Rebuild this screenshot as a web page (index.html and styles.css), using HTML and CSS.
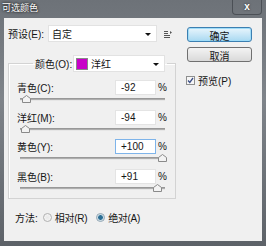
FILE: index.html
```html
<!DOCTYPE html>
<html lang="zh">
<head>
  <meta charset="UTF-8" />
  <title>可选颜色</title>
  <link rel="stylesheet" href="styles.css">
</head>
<body>

<div class="window">
  <div class="titlebar">
    <span class="title">可选颜色</span>
    <span class="close">x</span>
  </div>

  <div class="client">
    <div class="main">
      <div class="preset-row">
        <label class="preset-label">预设(E):</label>
        <div class="select preset-select">
          <span>自定</span>
          <span class="arrow"></span>
        </div>
        <svg class="preset-menu" width="9" height="9" viewBox="0 0 9 9">
          <path d="M0 1.5h4M0 3.5h4M0 5.5h6M0 7.5h6" stroke="#555" stroke-width="1" />
          <path d="M6 1l2 1.5-2 1.5z" fill="#555" />
        </svg>
      </div>

      <fieldset class="group">
        <legend>
          <label>颜色(O):</label>
          <div class="select color-select">
            <span class="swatch"></span>
            <span>洋红</span>
            <span class="arrow"></span>
          </div>
        </legend>

        <div class="rows">
          <div class="row">
            <div class="line">
              <label>青色(C):</label>
              <div class="field">-92</div>
              <span class="pct">%</span>
            </div>
            <div class="slider">
              <svg class="thumb" style="left:2px" width="9" height="8" viewBox="0 0 9 8"><polygon points="0.5,7.5 0.5,3.5 4.5,0.5 8.5,3.5 8.5,7.5" /></svg>
            </div>
          </div>
          <div class="row">
            <div class="line">
              <label>洋红(M):</label>
              <div class="field">-94</div>
              <span class="pct">%</span>
            </div>
            <div class="slider">
              <svg class="thumb" style="left:1px" width="9" height="8" viewBox="0 0 9 8"><polygon points="0.5,7.5 0.5,3.5 4.5,0.5 8.5,3.5 8.5,7.5" /></svg>
            </div>
          </div>
          <div class="row">
            <div class="line">
              <label>黄色(Y):</label>
              <div class="field focused">+100</div>
              <span class="pct">%</span>
            </div>
            <div class="slider">
              <svg class="thumb" style="left:138px" width="9" height="8" viewBox="0 0 9 8"><polygon points="0.5,7.5 0.5,3.5 4.5,0.5 8.5,3.5 8.5,7.5" /></svg>
            </div>
          </div>
          <div class="row">
            <div class="line">
              <label>黑色(B):</label>
              <div class="field">+91</div>
              <span class="pct">%</span>
            </div>
            <div class="slider">
              <svg class="thumb" style="left:133px" width="9" height="8" viewBox="0 0 9 8"><polygon points="0.5,7.5 0.5,3.5 4.5,0.5 8.5,3.5 8.5,7.5" /></svg>
            </div>
          </div>
        </div>
      </fieldset>

      <div class="method">
        <span>方法:</span>
        <span class="radio"></span>
        <span class="radio-label">相对(R)</span>
        <span class="radio checked"></span>
        <span class="radio-label">绝对(A)</span>
      </div>
    </div>

    <div class="side">
      <button class="btn btn-default">确定</button>
      <button class="btn">取消</button>
      <div class="preview">
        <svg class="checkbox" width="9" height="9" viewBox="0 0 9 9">
          <rect x="0.5" y="0.5" width="8" height="8" fill="#f6f6f6" stroke="#8e8f8f" />
          <path d="M2 4.5l1.8 2L7 2" fill="none" stroke="#3c4f86" stroke-width="1.3" />
        </svg>
        <span>预览(P)</span>
      </div>
    </div>
  </div>
</div>

</body>
</html>
```

FILE: styles.css
```css
* {
  box-sizing: border-box;
}
body {
  margin: 0;
  font-family: "Liberation Sans", "Noto Sans CJK SC", sans-serif;
  font-size: 10px;
  color: #151515;
}
.window {
  width: 266px;
  height: 246px;
  display: flex;
  flex-direction: column;
  padding: 0 4px 5px 4px;
  background: linear-gradient(#6d7278, #7f848a 40%, #5d6268);
}
.titlebar {
  height: 18px;
  display: flex;
  justify-content: space-between;
  align-items: flex-start;
}
.title {
  margin-left: -2px;
  color: #fff;
  font-size: 9px;
  line-height: 16px;
  text-shadow: 0 0 3px #222, 0 0 2px #222;
}
.close {
  width: 30px;
  height: 15px;
  border: 1px solid rgba(40, 44, 50, 0.5);
  border-top: none;
  border-radius: 0 0 4px 4px;
  color: #fff;
  font-weight: bold;
  text-align: center;
  line-height: 14px;
  text-shadow: 0 0 2px #222;
}
.client {
  flex: 1;
  display: flex;
  padding: 7px 0 0 4px;
  background: #f0f0f0;
}
.main {
  width: 167px;
}
.preset-row {
  display: flex;
  align-items: center;
  height: 17px;
}
.preset-label {
  width: 40px;
}
.select {
  display: flex;
  align-items: center;
  height: 17px;
  background: #fff;
  border: 1px solid #e2e2e2;
  position: relative;
}
.select .arrow {
  position: absolute;
  right: 5px;
  top: 7px;
  border-left: 3px solid transparent;
  border-right: 3px solid transparent;
  border-top: 3px solid #111;
}
.preset-select {
  width: 109px;
  padding-left: 3px;
}
.preset-menu {
  margin-left: 7px;
  margin-top: 2px;
}
.group {
  margin: 13px 0 0 0;
  width: 165px;
  padding: 0 8px 0 8px;
  border: 1px solid #d3d3d3;
  box-shadow: inset 1px 1px 0 #fff;
}
.group legend {
  display: flex;
  align-items: center;
  margin-left: 16px;
  padding: 0 2px;
}
.group legend label {
  width: 38px;
}
.color-select {
  width: 92px;
  padding-left: 2px;
}
.swatch {
  width: 12px;
  height: 12px;
  background: #c800c8;
  border: 1px solid #888;
  margin-right: 3px;
}
.rows {
  margin-top: 8px;
}
.row {
  height: 29.5px;
}
.line {
  display: flex;
  align-items: center;
  height: 15px;
}
.line label {
  flex: 1;
}
.field {
  width: 41px;
  height: 15px;
  padding-left: 5px;
  line-height: 13px;
  background: #fff;
  border: 1px solid #e4e4e4;
}
.field.focused {
  border-color: #7eb4ea;
}
.pct {
  width: 11px;
  text-align: right;
}
.slider {
  position: relative;
  width: 145px;
  height: 3px;
  margin: 3px 0 0 3px;
  background: linear-gradient(#8d8d8d, #b9b9b9);
  border-bottom: 1px solid #e6e6e6;
}
.thumb {
  position: absolute;
  top: -3px;
}
.thumb polygon {
  fill: #f3f3f3;
  stroke: #8a8a8a;
}
.method {
  display: flex;
  align-items: center;
  height: 12px;
  margin-top: 12px;
  padding-left: 7px;
}
.radio {
  width: 9px;
  height: 9px;
  margin-left: 5px;
  border-radius: 50%;
  border: 1px solid #b0b0b0;
  background: radial-gradient(#e8e8e8, #f8f8f8);
}
.radio.checked {
  margin-left: 9px;
  background: radial-gradient(#2b6d93 0 2px, #9fc3d6 2.5px, #f4f4f4 3.5px);
  border-color: #8ea4b3;
}
.radio-label {
  margin-left: 3px;
  letter-spacing: -0.3px;
}
.side {
  width: 65px;
  margin-left: 12px;
  padding-top: 2px;
}
.btn {
  display: block;
  width: 65px;
  height: 15px;
  padding: 0;
  margin: 0 0 5px 0;
  font-family: inherit;
  font-size: 10px;
  color: #151515;
  border: 1px solid #707070;
  border-radius: 3px;
  background: linear-gradient(#f3f3f3, #e6e6e6 50%, #d9d9d9);
}
.btn-default {
  border-color: #3c7fb1;
  background: linear-gradient(#e8f5fc, #c9e7f7 50%, #a9d9f1);
  box-shadow: inset 0 0 0 1px #9fdcf8;
}
.preview {
  display: flex;
  align-items: center;
  margin-top: 11px;
  margin-left: -1px;
}
.checkbox {
  margin-right: 3px;
}
```
